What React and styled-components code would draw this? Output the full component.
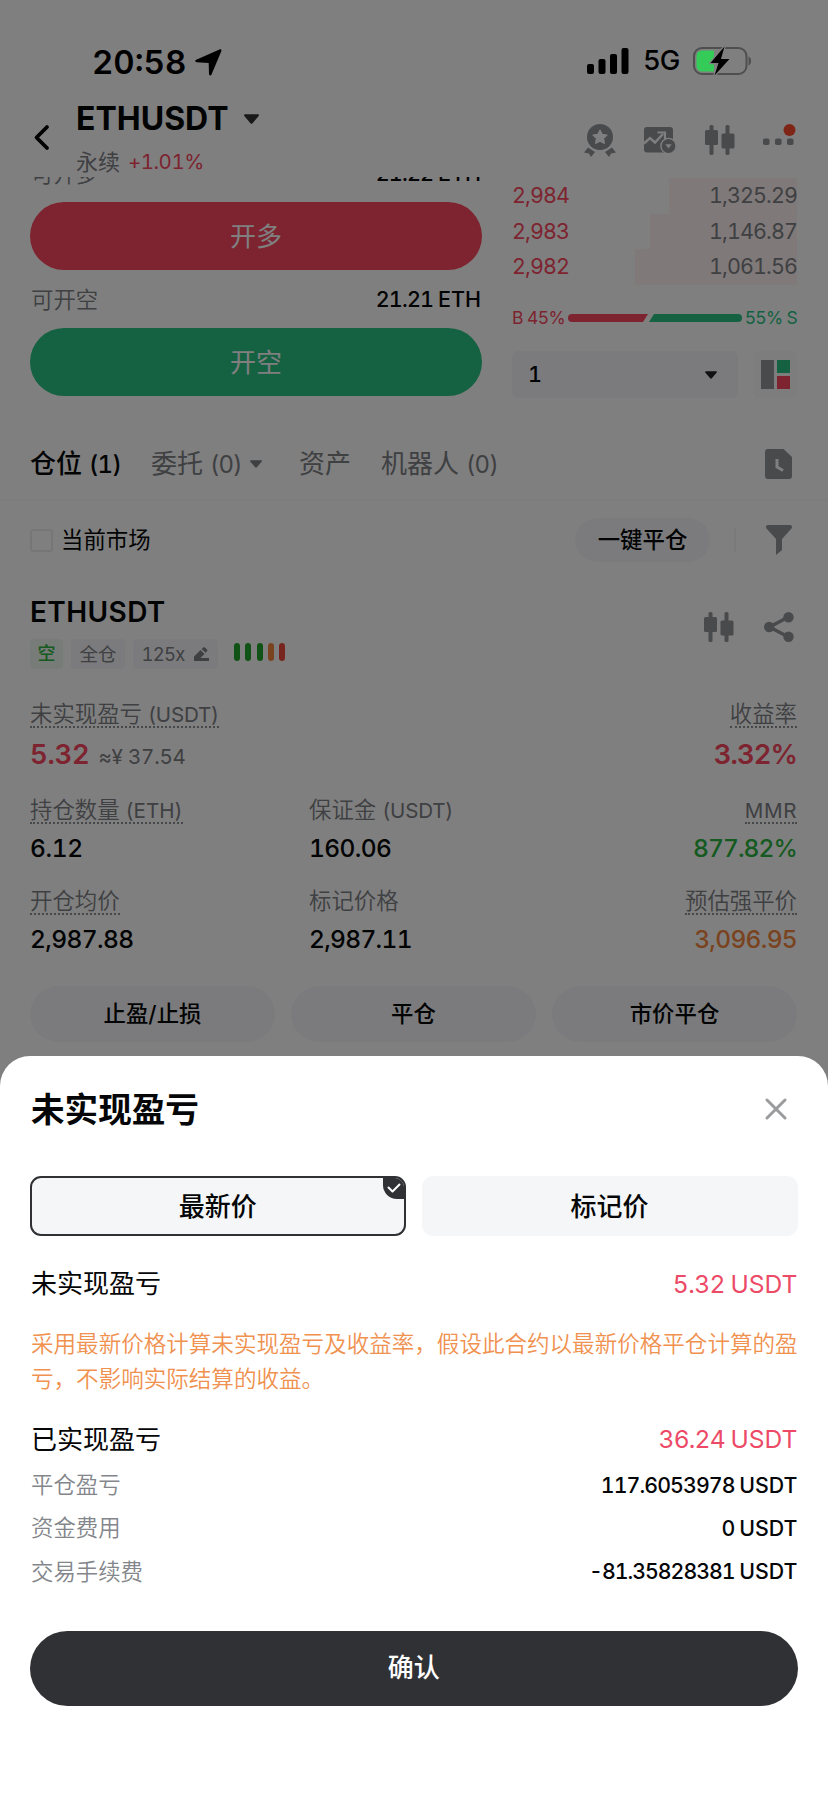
import React from "react";
import styled, { createGlobalStyle, css } from "styled-components";

const Global = createGlobalStyle`
  * { box-sizing: border-box; }
  body { margin: 0; background: #fff; }
  #root {
    font-family: Inter, "Noto Sans CJK SC", sans-serif;
    font-variant-numeric: tabular-nums;
    color: #000;
  }
`;

const c = {
  ink: "#050607",
  sub: "#7d8085",
  faint: "#83868b",
  icon: "#929498",
  fill: "#f7f7fa",
  red: "#fa4860",
  green: "#2ac486",
  dark: "#303135",
};

const Screen = styled.div`
  position: relative;
  width: 828px;
  height: 1800px;
  overflow: hidden;
  background: #fff;
`;

const T = styled.span`
  font-size: ${(p) => p.$s || 22}px;
  font-weight: ${(p) => p.$w || 400};
  color: ${(p) => p.$c || c.ink};
  letter-spacing: ${(p) => p.$ls || 0}px;
  line-height: 1;
  white-space: nowrap;
`;
const Unit = styled.span`
  font-size: 0.92em;
  font-weight: ${(p) => p.$w || "inherit"};
  letter-spacing: ${(p) => p.$ls || 0}px;
`;
const AmountText = styled(T)`
  word-spacing: -1px;
`;
const Digits = styled.span`
  letter-spacing: ${(p) => p.$ls}px;
`;
const Amount = ({ value, unit, $ls = -0.8, ...rest }) => (
  <AmountText {...rest}>
    <Digits $ls={$ls}>{value}</Digits> {unit}
  </AmountText>
);

/* status bar */
const StatusBar = styled.div`
  position: absolute;
  z-index: 2;
  top: 0;
  left: 0;
  width: 100%;
  height: 95px;
  padding: 30px 76px 0 92px;
  display: flex;
  justify-content: space-between;
`;
const StatusSide = styled.div`
  height: ${(p) => p.$height}px;
  display: flex;
  align-items: center;
  gap: ${(p) => p.$gap}px;
`;

/* header */
const Header = styled.header`
  height: 177px;
  padding: 100px 31px 0 32px;
  display: flex;
  justify-content: space-between;
`;
const HeaderLeft = styled.div`
  display: flex;
  gap: 26px;
`;
const BackButton = styled.div`
  width: 18px;
  padding-top: 24px;
`;
const Pair = styled.div`
  padding-top: 2px;
  display: flex;
  flex-direction: column;
`;
const PairName = styled.div`
  height: 36px;
  display: flex;
  align-items: center;
  gap: 15px;
`;
const PairInfo = styled.div`
  height: 30px;
  margin-top: 11px;
  display: flex;
  align-items: center;
  gap: 8px;
`;
const HeaderIcons = styled.div`
  height: 80px;
  display: flex;
  align-items: center;
  gap: 28.5px;
`;

/* order entry and book */
const Trading = styled.section`
  height: 253px;
  padding: 0 31px 0 30px;
  overflow: hidden;
  display: flex;
  justify-content: space-between;
`;
const Entry = styled.div`
  width: 452px;
  margin-top: -33px;
`;
const AvailRow = styled.div`
  height: 58px;
  padding: 2px 1px 0;
  display: flex;
  align-items: center;
  justify-content: space-between;
`;
const TradeButton = styled.button`
  display: block;
  width: 100%;
  height: 68px;
  padding: 2px 0 0;
  border: 0;
  border-radius: 34px;
  background: ${(p) => p.$bg};
  font-family: inherit;
`;
const Book = styled.div`
  width: 285px;
  padding-top: 1px;
`;
const BookRow = styled.div`
  height: 35.5px;
  display: flex;
  align-items: center;
  justify-content: space-between;
  background: linear-gradient(#fff3f2, #fff3f2) right / ${(p) => p.$depth}px 100% no-repeat;
`;
const Ratio = styled.div`
  height: 24px;
  margin-top: 21px;
  display: flex;
  align-items: center;
  justify-content: space-between;
`;
const BookTools = styled.div`
  margin-top: 21px;
  display: flex;
  justify-content: space-between;
`;
const Select = styled.div`
  width: 226px;
  height: 47px;
  padding: 1px 21px 0 16px;
  border-radius: 6px;
  background: ${c.fill};
  display: flex;
  align-items: center;
  justify-content: space-between;
`;
const LayoutButton = styled.div`
  width: 44px;
  height: 47px;
  border-radius: 6px;
  background: #fbfbfd;
  display: flex;
  align-items: center;
  justify-content: center;
`;

/* tabs and filter */
const Tabs = styled.nav`
  height: 71px;
  padding: 0 36px 2px 30px;
  border-bottom: 2px solid #fbfbfb;
  display: flex;
  align-items: center;
`;
const Tab = styled.div`
  width: ${(p) => p.$width}px;
  display: flex;
  align-items: center;
  gap: 8px;
`;
const TabsEnd = styled.div`
  height: 30px;
  margin-left: auto;
`;
const Filter = styled.div`
  height: 78px;
  padding: 0 36px 0 30px;
  display: flex;
  align-items: center;
`;
const Checkbox = styled.div`
  width: 23px;
  height: 23px;
  margin-right: 8px;
  border: 2px solid #ededed;
  border-radius: 3px;
`;
const CloseAll = styled.div`
  width: 135px;
  height: 44px;
  margin-left: auto;
  border-radius: 22px;
  background: ${c.fill};
  display: flex;
  align-items: center;
  justify-content: center;
`;
const Separator = styled.div`
  width: 2px;
  height: 24px;
  margin: 0 30px 0 24px;
  background: #f4f4f4;
`;

/* position card */
const Card = styled.section`
  padding: 13px 31px 0 30px;
`;
const CardHead = styled.div`
  height: 109px;
  display: flex;
  justify-content: space-between;
`;
const SymbolLine = styled.div`
  height: 40px;
  display: flex;
  align-items: center;
`;
const Tags = styled.div`
  height: 30px;
  margin-top: 7px;
  display: flex;
  align-items: center;
  gap: 8px;
`;
const Tag = styled.div`
  width: ${(p) => p.$width}px;
  height: 30px;
  border-radius: 4px;
  background: ${(p) => p.$bg || c.fill};
  display: flex;
  align-items: center;
  justify-content: center;
  gap: 10px;
`;
const Risk = styled.div`
  height: 18px;
  margin: -4px 0 0 8px;
  display: flex;
  gap: 5.3px;
`;
const RiskBar = styled.div`
  width: 6px;
  border-radius: 3px;
  background: ${(p) => p.$bg};
`;
const CardIcons = styled.div`
  height: 70px;
  padding-right: 3px;
  display: flex;
  align-items: center;
  gap: 30px;
`;
const Metrics = styled.div`
  height: ${(p) => p.$height}px;
  display: grid;
  grid-template-columns: 279px 1fr auto;
`;
const Metric = styled.div`
  grid-column: ${(p) => p.$col};
  display: flex;
  flex-direction: column;
  align-items: ${(p) => (p.$col === 3 ? "flex-end" : "flex-start")};
`;
const Label = styled.div`
  height: 27px;
  color: ${c.sub};
  font-size: 22.4px;
  font-weight: 350;
  line-height: 25px;
  white-space: nowrap;
  ${(p) => p.$dotted && css`border-bottom: 2px dotted #8e9094;`}
`;
const Value = styled.div`
  height: 36px;
  margin-top: ${(p) => p.$gap}px;
  display: flex;
  align-items: center;
  gap: 9px;
`;
const Approx = styled(T)`
  padding-top: 4px;
`;
const Actions = styled.div`
  display: grid;
  grid-template-columns: repeat(3, 1fr);
  gap: 16px;
`;
const Action = styled.div`
  height: 56px;
  border-radius: 28px;
  background: ${c.fill};
  display: flex;
  align-items: center;
  justify-content: center;
`;

/* bottom sheet */
const Overlay = styled.div`
  position: absolute;
  inset: 0;
  background: rgba(0, 0, 0, 0.5);
`;
const Sheet = styled.section`
  position: absolute;
  left: 0;
  right: 0;
  bottom: 0;
  height: 744.5px;
  padding: 25.5px 30.5px 0 30px;
  border-radius: 30px 30px 0 0;
  background: #fff;
`;
const SheetHead = styled.div`
  height: 58px;
  padding: 0 11px 0 1px;
  display: flex;
  align-items: center;
  justify-content: space-between;
`;
const CloseButton = styled.div`
  height: 25px;
`;
const Options = styled.div`
  margin-top: 37px;
  display: grid;
  grid-template-columns: 1fr 1fr;
  gap: 16px;
`;
const Option = styled.div`
  position: relative;
  height: 60px;
  padding-top: 2px;
  border-radius: 11px;
  overflow: hidden;
  background: #f4f6f8;
  border: 2px solid ${(p) => (p.$on ? c.dark : "#f4f6f8")};
  display: flex;
  align-items: center;
  justify-content: center;
`;
const Check = styled.div`
  position: absolute;
  top: -1px;
  right: -1px;
  width: 22px;
  height: 22px;
  border-bottom-left-radius: 14px;
  background: ${c.dark};
  display: flex;
  align-items: center;
  justify-content: center;
`;
const Line = styled.div`
  height: ${(p) => p.$height}px;
  margin-top: ${(p) => p.$top || 0}px;
  padding-left: 1px;
  display: flex;
  align-items: center;
  justify-content: space-between;
`;
const Note = styled.p`
  margin: 20px 0 0 1px;
  width: 770px;
  font-size: 22.56px;
  font-weight: 350;
  line-height: 35.3px;
  color: #f0914f;
`;
const Confirm = styled.button`
  display: block;
  width: 100%;
  height: 75px;
  margin-top: 37.5px;
  padding: 0;
  border: 0;
  border-radius: 38px;
  background: ${c.dark};
  font-family: inherit;
`;

const Caret = ({ w, h, color }) => (
  <svg width={w} height={h} viewBox="0 0 14 9">
    <path d="M1.2 0h11.6c1 0 1.5 1 .9 1.7L8 8.4c-.6.7-1.4.7-2 0L.3 1.7C-.3 1 .2 0 1.2 0z" fill={color} />
  </svg>
);
const Candles = () => (
  <svg width="30" height="30" viewBox="0 0 30 30" fill={c.icon}>
    <rect x="4.5" y="0" width="4" height="30" rx="1.5" />
    <rect x="0" y="5" width="13" height="15" rx="1.5" />
    <rect x="20.5" y="0" width="4" height="30" rx="1.5" />
    <rect x="16.5" y="8.5" width="13" height="15" rx="1.5" />
  </svg>
);
const Medal = () => (
  <svg width="32" height="33" viewBox="0 0 32 33">
    <circle cx="16" cy="13" r="13" fill={c.icon} />
    <path d="M16 5.8l2.300 4.500 5 .8-3.600 3.500.8 5-4.500-2.300-4.500 2.300.8-5-3.600-3.500 5-.8z" fill="#fff" stroke="#fff" strokeWidth="1" strokeLinejoin="round" />
    <path d="M4 23.500l7 4.500-4 5-2-3.500-5-1zM28 23.500l-7 4.500 4 5 2-3.500 5-1z" fill={c.icon} />
  </svg>
);
const ChartIcon = () => (
  <svg width="32" height="27" viewBox="0 0 32 27">
    <rect x="0" y="0" width="29" height="25.5" rx="3" fill={c.icon} />
    <path d="M0 16.5l6-5.5 5 4.500 8-8.500" fill="none" stroke="#fff" strokeWidth="2.4" />
    <path d="M13.500 5.500h7.500v7" fill="none" stroke="#fff" strokeWidth="2.2" />
    <circle cx="24.5" cy="19" r="8.3" fill="#fff" />
    <circle cx="24.5" cy="19" r="6.9" fill={c.icon} />
    <path d="M21.300 17.200h6.400l-3.200 4.200z" fill="#fff" />
  </svg>
);
const More = () => (
  <svg width="34" height="32" viewBox="0 0 34 32">
    <rect x="0" y="14.5" width="6.5" height="6.5" rx="1.8" fill={c.icon} />
    <rect x="12" y="14.5" width="6.5" height="6.5" rx="1.8" fill={c.icon} />
    <rect x="24" y="14.5" width="6.5" height="6.5" rx="1.8" fill={c.icon} />
    <circle cx="26.5" cy="6" r="6" fill="#ff4a30" />
  </svg>
);

const asks = [
  ["2,984", "1,325.29", 128],
  ["2,983", "1,146.87", 147],
  ["2,982", "1,061.56", 162],
];
const riskColors = ["#22a52c", "#22a52c", "#22a52c", "#f5873f", "#ee4a3c"];

export default function App() {
  return (
    <Screen>
      <Global />
      <StatusBar>
        <StatusSide $height={64} $gap={9}>
          <T $s={33} $w={600} $c="#000">20:58</T>
          <svg width="27" height="27" viewBox="0 0 27 27">
            <path d="M24.500.5c1.400-.5 2.300.4 1.800 1.800L16.500 25.500c-.6 1.400-2.400 1.200-2.500-.4L13.700 14 1.700 13.200C0 13-.2 11.300 1.200 10.700z" fill="#000" />
          </svg>
        </StatusSide>
        <StatusSide $height={62} $gap={13.5}>
          <svg width="42" height="26" viewBox="0 0 42 26" fill="#000">
            <rect x="0" y="16" width="7" height="10" rx="2" />
            <rect x="11.5" y="11" width="7" height="15" rx="2" />
            <rect x="23" y="6" width="7" height="20" rx="2" />
            <rect x="34.5" y="0" width="7" height="26" rx="2" />
          </svg>
          <T $s={27.5} $w={450} $c="#000" $ls={-0.9}>5G</T>
          <svg width="59" height="30" viewBox="0 0 59 30">
            <rect x="1" y="2" width="52.5" height="26" rx="8" fill="none" stroke="#4f4f4f" strokeWidth="2" />
            <path d="M55.500 10.500c3.500 1 3.500 8 0 9z" fill="#4f4f4f" />
            <path d="M9 4.500h12v21H9a5.500 5.500 0 0 1-5.500-5.500v-10A5.500 5.500 0 0 1 9 4.500z" fill="#34cb59" />
            <path d="M31.500.5L17.500 17h8l-4 12.500L36.500 13h-8.500z" fill="#000" stroke="#808080" strokeWidth="2.5" paintOrder="stroke" strokeLinejoin="round" />
          </svg>
        </StatusSide>
      </StatusBar>

      <Header>
        <HeaderLeft>
          <BackButton>
            <svg width="18" height="27" viewBox="0 0 18 27">
              <path d="M15 3L4.500 13.500 15 24" fill="none" stroke="#000" strokeWidth="3.8" strokeLinecap="round" strokeLinejoin="round" />
            </svg>
          </BackButton>
          <Pair>
            <PairName>
              <T $s={32} $w={700}>ETHUSDT</T>
              <Caret w={15} h={10} color="#333" />
            </PairName>
            <PairInfo>
              <T $s={22} $c={c.sub}>永续</T>
              <T $s={20.5} $ls={-0.5} $c={c.red}>+1.01%</T>
            </PairInfo>
          </Pair>
        </HeaderLeft>
        <HeaderIcons>
          <Medal />
          <ChartIcon />
          <Candles />
          <More />
        </HeaderIcons>
      </Header>

      <Trading>
        <Entry>
          <AvailRow>
            <T $s={22.4} $w={350} $c={c.sub}>可开多</T>
            <Amount $s={21.5} $w={500} value="21.22" unit="ETH" />
          </AvailRow>
          <TradeButton $bg={c.red}><T $s={26} $c="#fff">开多</T></TradeButton>
          <AvailRow>
            <T $s={22.4} $w={350} $c={c.sub}>可开空</T>
            <Amount $s={21.5} $w={500} value="21.21" unit="ETH" />
          </AvailRow>
          <TradeButton $bg={c.green}><T $s={26} $c="#fff">开空</T></TradeButton>
        </Entry>
        <Book>
          {asks.map(([price, size, depth]) => (
            <BookRow key={price} $depth={depth}>
              <T $s={21.5} $ls={-0.9} $c={c.red}>{price}</T>
              <T $s={21.5} $ls={-0.9} $c={c.sub}>{size}</T>
            </BookRow>
          ))}
          <Ratio>
            <T $s={17.5} $ls={-0.6} $c={c.red}>B 45%</T>
            <svg width="174" height="8" viewBox="0 0 174 8">
              <path d="M4 0h76l-5 8H4a4 4 0 0 1 0-8z" fill={c.red} />
              <path d="M86 0h84a4 4 0 0 1 0 8H81z" fill={c.green} />
            </svg>
            <T $s={17.5} $ls={-0.7} $c={c.green}>55% S</T>
          </Ratio>
          <BookTools>
            <Select>
              <T $s={21.5} $w={500}>1</T>
              <Caret w={12} h={8} color="#222" />
            </Select>
            <LayoutButton>
              <svg width="29" height="29" viewBox="0 0 29 29">
                <rect width="13" height="29" fill={c.icon} />
                <rect x="16" width="13" height="13" fill={c.green} />
                <rect x="16" y="16" width="13" height="13" fill={c.red} />
              </svg>
            </LayoutButton>
          </BookTools>
        </Book>
      </Trading>

      <Tabs>
        <Tab $width={121}><T $s={26} $w={500}>仓位 <Unit $ls={-0.7}>(1)</Unit></T></Tab>
        <Tab $width={148}>
          <T $s={26} $c={c.sub}>委托 <Unit $ls={-0.8}>(0)</Unit></T>
          <Caret w={12} h={8} color={c.sub} />
        </Tab>
        <Tab $width={82}><T $s={26} $c={c.sub}>资产</T></Tab>
        <Tab $width={120}><T $s={26} $c={c.sub}>机器人 <Unit $ls={-0.7}>(0)</Unit></T></Tab>
        <TabsEnd>
          <svg width="27" height="30" viewBox="0 0 27 30">
            <path d="M3 0h15.500L27 8v19a3 3 0 0 1-3 3H3a3 3 0 0 1-3-3V3a3 3 0 0 1 3-3z" fill={c.icon} />
            <path d="M12 10v8l6 3.500" fill="none" stroke="#fff" strokeWidth="3" />
          </svg>
        </TabsEnd>
      </Tabs>

      <Filter>
        <Checkbox />
        <T $s={22.4}>当前市场</T>
        <CloseAll><T $s={22.4} $w={500}>一键平仓</T></CloseAll>
        <Separator />
        <svg width="26" height="30" viewBox="0 0 26 30">
          <path d="M2 0h22c2 0 2.500 2 1.500 3.500L16 14v11l-6 5V14L.5 3.500C-.5 2 0 0 2 0z" fill={c.icon} />
        </svg>
      </Filter>

      <Card>
        <CardHead>
          <div>
            <SymbolLine><T $s={28} $w={600} $ls={0.4}>ETHUSDT</T></SymbolLine>
            <Tags>
              <Tag $width={33} $bg="#eff8f0"><T $s={18} $w={500} $c="#2bb540">空</T></Tag>
              <Tag $width={54}><T $s={18.5} $c={c.sub}>全仓</T></Tag>
              <Tag $width={85}>
                <T $s={18.5} $ls={-0.8} $c={c.sub}>125x</T>
                <svg width="15" height="14" viewBox="0 0 15 14" fill={c.sub}>
                  <path d="M0 14V9.500L6.500 3l4 4-4 4H15v3zM7.700 1.900L9.200.5c.5-.5 1.200-.5 1.700 0l2.100 2c.5.5.5 1.200 0 1.700l-1.400 1.500z" />
                </svg>
              </Tag>
              <Risk>
                {riskColors.map((bg, i) => <RiskBar key={i} $bg={bg} />)}
              </Risk>
            </Tags>
          </div>
          <CardIcons>
            <Candles />
            <svg width="30" height="30" viewBox="0 0 30 30" fill={c.icon}>
              <path d="M24.500 5L5.500 15l19 10" fill="none" stroke={c.icon} strokeWidth="3.5" />
              <circle cx="24.5" cy="5.2" r="5.2" />
              <circle cx="5.2" cy="15" r="5.2" />
              <circle cx="24.5" cy="24.8" r="5.2" />
            </svg>
          </CardIcons>
        </CardHead>

        <Metrics $height={96}>
          <Metric $col={1}>
            <Label $dotted>未实现盈亏 <Unit $w={400} $ls={-0.2}>(USDT)</Unit></Label>
            <Value $gap={9}>
              <T $s={27.3} $w={600} $ls={-0.2} $c={c.red}>5.32</T>
              <Approx $s={20.5} $ls={-0.2} $c={c.sub}>≈¥ 37.54</Approx>
            </Value>
          </Metric>
          <Metric $col={3}>
            <Label $dotted>收益率</Label>
            <Value $gap={9}><T $s={27.3} $w={600} $ls={-0.9} $c={c.red}>3.32%</T></Value>
          </Metric>
        </Metrics>
        <Metrics $height={91}>
          <Metric $col={1}>
            <Label $dotted>持仓数量 <Unit $w={400}>(ETH)</Unit></Label>
            <Value $gap={6}><T $s={24.5} $w={500} $ls={-0.4}>6.12</T></Value>
          </Metric>
          <Metric $col={2}>
            <Label>保证金 <Unit $w={400} $ls={-0.2}>(USDT)</Unit></Label>
            <Value $gap={6}><T $s={24.5} $w={500} $ls={-0.6}>160.06</T></Value>
          </Metric>
          <Metric $col={3}>
            <Label $dotted><Unit $w={400} $ls={0.6}>MMR</Unit></Label>
            <Value $gap={6}><T $s={24.5} $w={500} $ls={-0.9} $c="#2bb540">877.82%</T></Value>
          </Metric>
        </Metrics>
        <Metrics $height={98}>
          <Metric $col={1}>
            <Label $dotted>开仓均价</Label>
            <Value $gap={6}><T $s={24.5} $w={500} $ls={-0.6}>2,987.88</T></Value>
          </Metric>
          <Metric $col={2}>
            <Label>标记价格</Label>
            <Value $gap={6}><T $s={24.5} $w={500} $ls={-0.7}>2,987.11</T></Value>
          </Metric>
          <Metric $col={3}>
            <Label $dotted>预估强平价</Label>
            <Value $gap={6}><T $s={24.5} $w={500} $ls={-0.7} $c="#f5873f">3,096.95</T></Value>
          </Metric>
        </Metrics>
        <Actions>
          {["止盈/止损", "平仓", "市价平仓"].map((t) => (
            <Action key={t}><T $s={22.4} $w={500}>{t}</T></Action>
          ))}
        </Actions>
      </Card>

      <Overlay />

      <Sheet>
        <SheetHead>
          <T $s={33.6} $w={700}>未实现盈亏</T>
          <CloseButton>
            <svg width="22" height="22" viewBox="0 0 22 22">
              <path d="M2 2l18 18M20 2L2 20" stroke="#9a9b9d" strokeWidth="3" strokeLinecap="round" />
            </svg>
          </CloseButton>
        </SheetHead>
        <Options>
          <Option $on>
            <T $s={26} $w={500}>最新价</T>
            <Check>
              <svg width="14" height="10" viewBox="0 0 14 10">
                <path d="M1.500 4.500l4 4L12.500 1.500" fill="none" stroke="#fff" strokeWidth="2" strokeLinecap="round" strokeLinejoin="round" />
              </svg>
            </Check>
          </Option>
          <Option><T $s={26} $w={500}>标记价</T></Option>
        </Options>
        <Line $height={44} $top={26}>
          <T $s={26}>未实现盈亏</T>
          <Amount $s={24.6} $ls={-0.6} $c="#ec4a66" value="5.32" unit="USDT" />
        </Line>
        <Note>采用最新价格计算未实现盈亏及收益率，假设此合约以最新价格平仓计算的盈亏，不影响实际结算的收益。</Note>
        <Line $height={44} $top={21}>
          <T $s={26}>已实现盈亏</T>
          <Amount $s={24.6} $ls={-0.8} $c="#ec4a66" value="36.24" unit="USDT" />
        </Line>
        <Line $height={43.3} $top={2}>
          <T $s={22.4} $w={350} $c={c.faint}>平仓盈亏</T>
          <Amount $s={21.3} $w={500} $ls={-0.9} value="117.6053978" unit="USDT" />
        </Line>
        <Line $height={43.3}>
          <T $s={22.4} $w={350} $c={c.faint}>资金费用</T>
          <Amount $s={21.3} $w={500} value="0" unit="USDT" />
        </Line>
        <Line $height={43.3}>
          <T $s={22.4} $w={350} $c={c.faint}>交易手续费</T>
          <Amount $s={21.3} $w={500} $ls={-1} value="-81.35828381" unit="USDT" />
        </Line>
        <Confirm><T $s={26} $w={500} $c="#fff">确认</T></Confirm>
      </Sheet>
    </Screen>
  );
}
